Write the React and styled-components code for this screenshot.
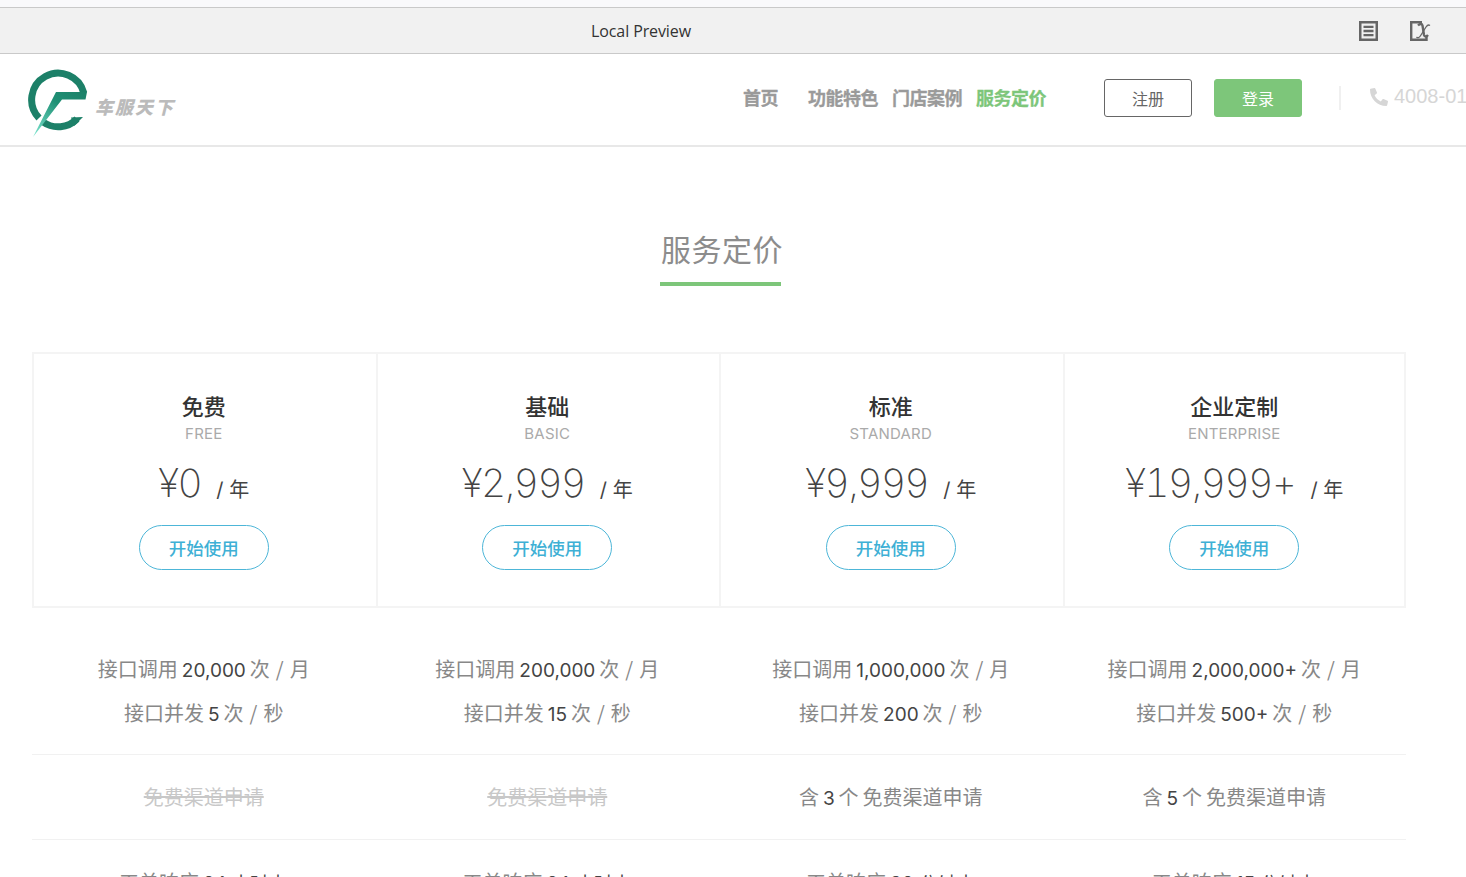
import React from 'react';
import styled, { createGlobalStyle } from 'styled-components';
import { FaPhone } from 'react-icons/fa';

const Global = createGlobalStyle`
  html, body {
    margin: 0;
    height: 877px;
    overflow: hidden;
    background: #fff;
  }
  body {
    font-family: "Inter", "Noto Sans CJK SC", sans-serif;
    color: #666;
  }
`;

const Page = styled.div`
  width: 1466px;
  height: 877px;
  overflow: hidden;
`;
const TopStrip = styled.div`
  height: 7px;
  background: #f9f9fb;
`;
const PreviewBar = styled.div`
  height: 45px;
  background: #f1f1f1;
  border-top: 1px solid #c9c9c9;
  border-bottom: 1px solid #c9c9c9;
  display: flex;
  align-items: center;
  font-family: "Open Sans", "Noto Sans", sans-serif;
  font-size: 16px;
  color: #333;
`;
const PreviewTitle = styled.div`
  width: 1282px;
  flex-shrink: 0;
  text-align: center;
  letter-spacing: -0.1px;
`;
const PreviewIcons = styled.div`
  display: flex;
  align-items: center;
  gap: 32px;
  margin-left: 77px;
  color: #666;
`;
const Header = styled.header`
  height: 87px;
  padding: 0 0 4px 28px;
  border-bottom: 2px solid #e8e8e8;
  display: flex;
  align-items: center;
  white-space: nowrap;
  overflow: hidden;
`;
const Logo = styled.div`
  display: flex;
  align-items: flex-end;
  flex-shrink: 0;
  width: 715px;
  padding-top: 13px;
`;
const LogoName = styled.span`
  font-family: "Noto Sans CJK SC", sans-serif;
  font-size: 18px;
  font-weight: 900;
  font-style: italic;
  line-height: 24px;
  color: #bbb;
  margin: 0 0 21px 5px;
  letter-spacing: 2px;
`;
const Nav = styled.nav`
  display: flex;
  align-items: center;
  flex-shrink: 0;
  width: 361px;
  padding-bottom: 2px;
`;
const NavLink = styled.a`
  font-family: "Noto Sans CJK SC", sans-serif;
  font-size: 18px;
  font-weight: 700;
  letter-spacing: -0.5px;
  -webkit-text-stroke: 0.3px currentColor;
  color: ${(p) => (p.$active ? '#7dc67a' : '#9a9a9a')};
  margin-right: ${(p) => p.$gap}px;
`;
const AuthButton = styled.button`
  flex-shrink: 0;
  width: 88px;
  height: 38px;
  margin-right: ${(p) => (p.$primary ? 37 : 22)}px;
  border-radius: 3px;
  border: 1px solid ${(p) => (p.$primary ? '#7dc67a' : '#666')};
  background: ${(p) => (p.$primary ? '#7dc67a' : '#fff')};
  color: ${(p) => (p.$primary ? '#fff' : '#666')};
  font-family: "Noto Sans CJK SC", sans-serif;
  font-size: 16px;
  padding: 0;
`;
const Divider = styled.span`
  flex-shrink: 0;
  width: 2px;
  height: 24px;
  background: #f0f0f0;
  margin-right: 29px;
`;
const Phone = styled.div`
  display: flex;
  align-items: center;
  flex-shrink: 0;
  gap: 6px;
  padding-bottom: 2px;
  color: #d6d6d6;
  font-family: "Liberation Sans", sans-serif;
  font-size: 20px;
`;
const Section = styled.section`
  width: 1374px;
  margin-left: 32px;
`;
const Title = styled.h2`
  width: 121px;
  margin: 79px 0 0 628px;
  padding-bottom: 12px;
  border-bottom: 4px solid #7dc67a;
  font-family: "Noto Sans CJK SC", sans-serif;
  font-size: 30px;
  font-weight: 400;
  letter-spacing: 0.5px;
  text-indent: 1px;
  line-height: 44px;
  color: #8c8c8c;
  text-align: center;
  white-space: nowrap;
`;
const Plans = styled.div`
  display: grid;
  grid-template-columns: repeat(4, 1fr);
  height: 256px;
  margin-top: 66px;
  box-shadow: inset 0 0 0 2px #f4f4f4;
`;
const Plan = styled.div`
  display: flex;
  flex-direction: column;
  align-items: center;
  padding-top: 37px;
  box-shadow: ${(p) => (p.$first ? 'none' : 'inset 2px 0 0 #f4f4f4')};
`;
const PlanName = styled.div`
  font-family: "Noto Sans CJK SC", sans-serif;
  font-size: 22px;
  font-weight: 500;
  line-height: 32px;
  color: #333;
`;
const PlanCode = styled.div`
  font-size: 15px;
  letter-spacing: 0.2px;
  line-height: 20px;
  margin-top: 3px;
  color: #aaa;
`;
const Price = styled.div`
  display: flex;
  align-items: baseline;
  margin-top: 14px;
  height: 50px;
  color: #444;
`;
const Amount = styled.span`
  font-size: 39px;
  font-weight: 200;
  font-variant-numeric: tabular-nums;
  letter-spacing: -1.5px;
  line-height: 50px;
`;
const Per = styled.span`
  font-size: 20px;
  margin-left: 15px;
`;
const StartButton = styled.button`
  width: 130px;
  height: 45px;
  margin-top: 17px;
  border: 1px solid #4db6d8;
  border-radius: 23px;
  background: #fff;
  color: #3eb0d5;
  font-family: "Noto Sans CJK SC", sans-serif;
  font-size: 17.5px;
  font-weight: 500;
  padding: 0;
`;
const Row = styled.div`
  display: grid;
  grid-template-columns: repeat(4, 1fr);
  padding: ${(p) => p.$pad};
  border-bottom: 1px solid #f1f1f1;
`;
const Cell = styled.div`
  display: flex;
  flex-direction: column;
  gap: 12px;
  align-items: center;
`;
const Feature = styled.div`
  font-family: "Noto Sans CJK SC", sans-serif;
  font-size: 20px;
  line-height: 30px;
  word-spacing: -0.5px;
  color: ${(p) => (p.$off ? '#c8c8c8' : '#888')};
  text-decoration: ${(p) => (p.$off ? 'line-through' : 'none')};
  white-space: nowrap;
`;
const Num = styled.span`
  font-family: "Inter", sans-serif;
  font-size: 19px;
  color: #444;
`;
const Slash = styled.span`
  margin: 0 2px;
`;

const plans = [
  { name: '免费', code: 'FREE', price: '¥0', calls: '20,000', conc: '5', channel: null, ticket: '24 小时内' },
  { name: '基础', code: 'BASIC', price: '¥2,999', calls: '200,000', conc: '15', channel: null, ticket: '24 小时内' },
  { name: '标准', code: 'STANDARD', price: '¥9,999', calls: '1,000,000', conc: '200', channel: '3', ticket: '30 分钟内' },
  { name: '企业定制', code: 'ENTERPRISE', price: '¥19,999+', calls: '2,000,000+', conc: '500+', channel: '5', ticket: '15 分钟内' },
];

const LogoMark = () => (
  <svg width="62" height="70" viewBox="0 0 62 70">
    <defs>
      <linearGradient id="bolt" x1="0" y1="1" x2="1" y2="0">
        <stop offset="0" stopColor="#7fe8d2" />
        <stop offset="0.6" stopColor="#1f9075" />
        <stop offset="1" stopColor="#1c8068" />
      </linearGradient>
    </defs>
    <path d="M11 49 A26.5 26.5 0 1 1 55.800 24" fill="none" stroke="#1c8068" strokeWidth="7" />
    <path d="M15 53 A26.500 26.500 0 0 0 49 50" fill="none" stroke="#1c8068" strokeWidth="7" />
    <path d="M55 48 L43 48.500 L46 57 Z" fill="#1c8068" />
    <path d="M5 68 L28 23 L59 23 L57.500 30.500 L34 30.500 Z" fill="url(#bolt)" />
  </svg>
);

const DocIcon = () => (
  <svg width="19" height="20" viewBox="0 0 19 20">
    <rect x="1.250" y="1.250" width="16.500" height="17.500" fill="none" stroke="currentColor" strokeWidth="2.500" />
    <path d="M4.500 5.800h10M4.500 10h10M4.500 14.200h10" stroke="currentColor" strokeWidth="2.300" />
  </svg>
);

const FormulaIcon = () => (
  <svg width="21" height="20" viewBox="0 0 21 20">
    <path d="M12 1.200H1.200v17.600h15.300v-4" fill="none" stroke="currentColor" strokeWidth="2.400" />
    <path d="M8 4.500c2-2 4-2 4.500 0l1.500 9.500c.5 2 2.500 2 4 0" fill="none" stroke="currentColor" strokeWidth="2.400" />
    <path d="M6.500 16c1.500 1.500 3 .5 4.500-2L16 6c1-1.500 2.500-2.500 4-1.500" fill="none" stroke="currentColor" strokeWidth="1.300" />
  </svg>
);

const App = () => (
  <Page>
    <Global />
    <TopStrip />
    <PreviewBar>
      <PreviewTitle>Local Preview</PreviewTitle>
      <PreviewIcons>
        <DocIcon />
        <FormulaIcon />
      </PreviewIcons>
    </PreviewBar>
    <Header>
      <Logo>
        <LogoMark />
        <LogoName>车服天下</LogoName>
      </Logo>
      <Nav>
        <NavLink $gap={30}>首页</NavLink>
        <NavLink $gap={14}>功能特色</NavLink>
        <NavLink $gap={14}>门店案例</NavLink>
        <NavLink $active $gap={0}>服务定价</NavLink>
      </Nav>
      <AuthButton>注册</AuthButton>
      <AuthButton $primary>登录</AuthButton>
      <Divider />
      <Phone>
        <FaPhone size={18} style={{ transform: 'scaleX(-1)' }} />
        4008-010-010
      </Phone>
    </Header>
    <Section>
      <Title>服务定价</Title>
      <Plans>
        {plans.map((plan, i) => (
          <Plan key={plan.code} $first={i === 0}>
            <PlanName>{plan.name}</PlanName>
            <PlanCode>{plan.code}</PlanCode>
            <Price>
              <Amount>{plan.price}</Amount>
              <Per>/ 年</Per>
            </Price>
            <StartButton>开始使用</StartButton>
          </Plan>
        ))}
      </Plans>
      <Row $pad="46px 0 24px">
        {plans.map((plan) => (
          <Cell key={plan.code}>
            <Feature>接口调用 <Num>{plan.calls}</Num> 次 <Slash>/</Slash> 月</Feature>
            <Feature>接口并发 <Num>{plan.conc}</Num> 次 <Slash>/</Slash> 秒</Feature>
          </Cell>
        ))}
      </Row>
      <Row $pad="27px 0 25px">
        {plans.map((plan) => (
          <Cell key={plan.code}>
            {plan.channel ? (
              <Feature>含 <Num>{plan.channel}</Num> 个 免费渠道申请</Feature>
            ) : (
              <Feature $off>免费渠道申请</Feature>
            )}
          </Cell>
        ))}
      </Row>
      <Row $pad="27px 0">
        {plans.map((plan) => (
          <Cell key={plan.code}>
            <Feature>工单响应 <Num>{plan.ticket}</Num></Feature>
          </Cell>
        ))}
      </Row>
    </Section>
  </Page>
);

export default App;
